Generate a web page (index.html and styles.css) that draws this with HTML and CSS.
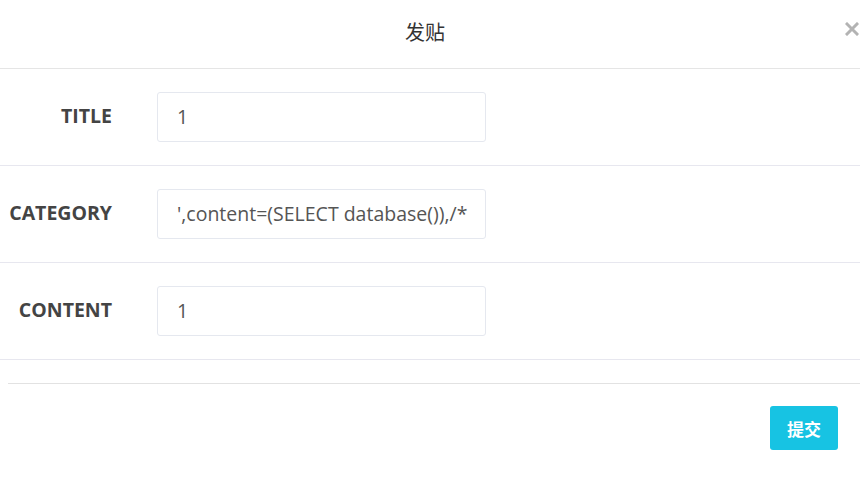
FILE: index.html
```html
<!DOCTYPE html>
<html>
<head>
<meta charset="utf-8">
<link rel="stylesheet" href="styles.css">
</head>
<body>
<div class="modal">
  <div class="modal-header">
    <h4 class="modal-title">发贴</h4>
    <span class="close" aria-label="close">
      <svg width="14" height="14" viewBox="0 0 14 14"><path d="M2 2 L12 12 M12 2 L2 12" stroke="#b3b3b3" stroke-width="3" stroke-linecap="square"/></svg>
    </span>
  </div>
  <div class="form">
    <div class="row">
      <label class="label">TITLE</label>
      <div class="input">1</div>
    </div>
    <div class="row">
      <label class="label">CATEGORY</label>
      <div class="input">',content=(SELECT database()),/*</div>
    </div>
    <div class="row">
      <label class="label">CONTENT</label>
      <div class="input">1</div>
    </div>
  </div>
  <div class="modal-footer">
    <button class="btn">提交</button>
  </div>
</div>
</body>
</html>
```
FILE: styles.css
```css
html, body {
  margin: 0;
  padding: 0;
  background: #fff;
}
body {
  font-family: "Open Sans", "Noto Sans CJK SC", sans-serif;
  width: 860px;
  height: 484px;
  overflow: hidden;
}
.modal-header {
  position: relative;
  height: 68px;
  border-bottom: 1px solid #e5e5e5;
  display: flex;
  align-items: center;
  justify-content: center;
  padding-right: 10px;
}
.modal-title {
  margin: 0;
  font-family: "Noto Sans CJK SC", sans-serif;
  font-weight: 400;
  font-size: 20px;
  color: #333;
  line-height: 1;
  margin-top: -4px;
}
.close {
  position: absolute;
  right: 1px;
  top: 22px;
  width: 14px;
  height: 14px;
  display: block;
}
.close svg { display: block; }
.row {
  display: grid;
  grid-template-columns: 112px 329px;
  column-gap: 45px;
  align-items: center;
  padding: 23px 0;
  border-bottom: 1px solid #e7e7ef;
}
.label {
  text-align: right;
  font-weight: 700;
  font-size: 19.5px;
  color: #444;
  margin-top: -4px;
}
.input {
  box-sizing: border-box;
  height: 50px;
  border: 1px solid #e5e8ef;
  border-radius: 3px;
  padding: 0 19px;
  line-height: 48px;
  font-size: 19.5px;
  color: #555;
  white-space: nowrap;
  overflow: hidden;
  text-align: left;
}
.modal-footer {
  margin: 23px 0 0 8px;
  border-top: 1px solid #e2e2e2;
  padding: 22px 22px 0 0;
  display: flex;
  justify-content: flex-end;
}
.btn {
  width: 68px;
  height: 44px;
  border: none;
  border-radius: 3px;
  background: #17c3e3;
  color: #fff;
  font-family: "Noto Sans CJK SC", sans-serif;
  font-weight: 700;
  font-size: 17px;
  padding: 0;
}
```
